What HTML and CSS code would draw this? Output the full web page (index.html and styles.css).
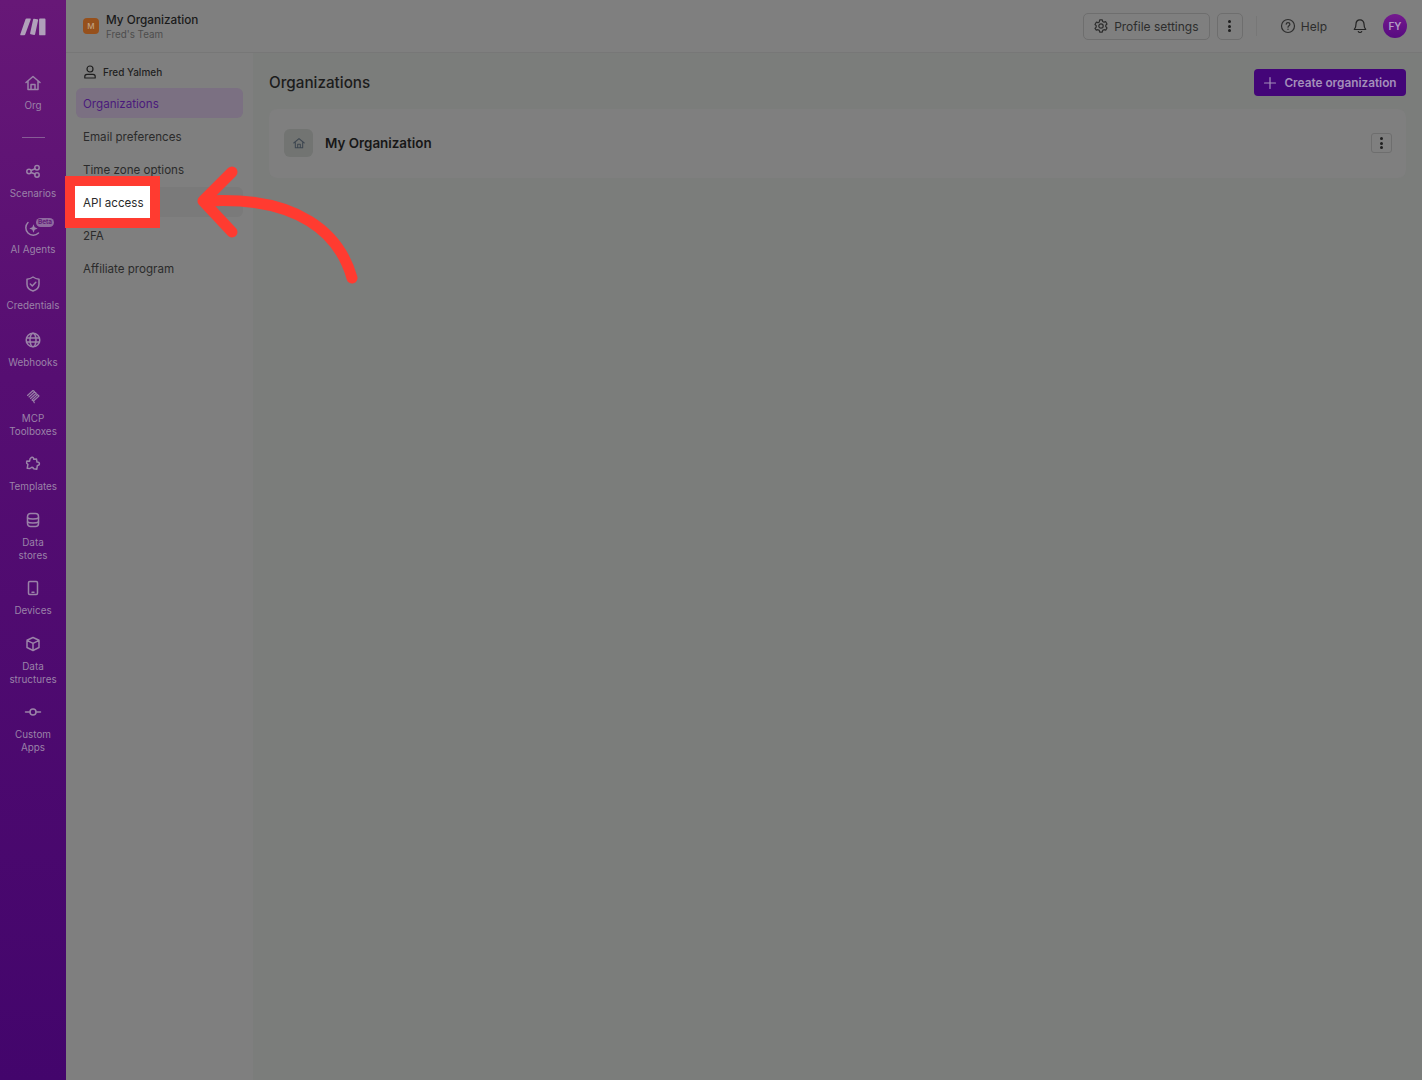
FILE: index.html
```html
<!DOCTYPE html>
<html lang="en">

<head>
    <meta charset="UTF-8">
    <meta name="viewport" content="width=device-width, initial-scale=1.0">
    <title>Organizations</title>
    <link rel="stylesheet" href="styles.css">
</head>

<body>
    <div class="app">
        <aside class="sidebar">
            <div class="logo">
                <svg width="26" height="18" viewBox="0 0 26 18"><path fill="currentColor" d="M6.500 .5h3.600c.5 0 .8.400.6.900L5.200 16.600c-.2.400-.5.700-1 .7H1c-.6 0-.9-.5-.7-1L5.600 1c.2-.3.500-.5.900-.5zM14 .7l3.400.6c.5.100.8.500.7 1l-3 13.900c-.1.500-.5.800-1 .7l-3.300-.6c-.5-.1-.8-.5-.7-1l3-13.900c.1-.5.400-.8.900-.7zM20 .5h4.600c.5 0 .9.400.9.900v15c0 .5-.4.900-.9.900H20c-.5 0-.9-.4-.9-.9v-15c0-.5.400-.9.900-.9z"/></svg>
            </div>
            <a class="side-item">
                <svg class="side-icon" viewBox="0 0 20 20"><path d="M3 9.500 10 3.500l7 6M5 8v8.500h10V8M8 16.500v-5h4v5"/></svg>
                <span>Org</span>
            </a>
            <div class="side-divider"></div>
            <a class="side-item">
                <svg class="side-icon" viewBox="0 0 20 20"><circle cx="6" cy="10.500" r="2.200"/><circle cx="14" cy="6.800" r="2.200"/><circle cx="14" cy="14" r="2.200"/><path d="M8 9.500l4-1.800M8 11.500l4 1.500"/></svg>
                <span>Scenarios</span>
            </a>
            <a class="side-item">
                <span class="ai-icon">
                    <svg class="side-icon" viewBox="0 0 20 20"><path d="M15.500 15A7.300 7.300 0 0 1 5 4.500"/><path class="solid" d="M10.500 6.300l1.200 3 3 1.200-3 1.200-1.200 3-1.200-3-3-1.200 3-1.200z"/></svg>
                    <span class="beta">Beta</span>
                </span>
                <span>AI Agents</span>
            </a>
            <a class="side-item">
                <svg class="side-icon" viewBox="0 0 20 20"><path d="M10 3c2 1.400 4 2 6 2.200v5c0 3.500-2.500 5.700-6 6.800-3.500-1.100-6-3.300-6-6.800v-5C6 5 8 4.400 10 3z"/><path d="M7.300 10l2 2 3.500-3.700"/></svg>
                <span>Credentials</span>
            </a>
            <a class="side-item">
                <svg class="side-icon" viewBox="0 0 20 20"><circle cx="10" cy="10" r="6.800"/><ellipse cx="10" cy="10" rx="3" ry="6.800"/><path d="M3.500 8h13M3.500 12h13"/></svg>
                <span>Webhooks</span>
            </a>
            <a class="side-item">
                <svg class="side-icon thin" viewBox="0 0 20 20"><path d="M4.500 9.500 10 4.500l1.500 1M6 11l5.500-5 1.500 1M7.500 12.500l5.500-5 1.500 1.200M9 14l5.500-5.300L16 10l-5.500 5-1.500-1M10.500 15l.8 1.800"/></svg>
                <span>MCP<br>Toolboxes</span>
            </a>
            <a class="side-item">
                <svg class="side-icon" viewBox="0 0 20 20"><path d="M8 3.800c.6-.8 2.200-.6 2.600.4l.2 1.100 2.700-.2.500 3c1.300-.2 2.400.5 2.400 1.700 0 1.100-.9 1.700-2 1.700l-.7 3.800-3-.6c-.4-1.200-1.300-1.500-2.300-1.200l-1.500 1-2.700-.2.700-4c-1-.5-1.500-1.400-1.300-2.200l.3-1.200 2.700.3.500-2.500z"/></svg>
                <span>Templates</span>
            </a>
            <a class="side-item">
                <svg class="side-icon" viewBox="0 0 20 20"><rect x="4.500" y="3.500" width="11" height="13" rx="3"/><path d="M4.500 8c2 1.300 9 1.300 11 0M4.500 12c2 1.300 9 1.300 11 0"/></svg>
                <span>Data<br>stores</span>
            </a>
            <a class="side-item">
                <svg class="side-icon" viewBox="0 0 20 20"><rect x="5.500" y="3.500" width="9" height="13" rx="1.200"/><path d="M9 14.300h2"/></svg>
                <span>Devices</span>
            </a>
            <a class="side-item">
                <svg class="side-icon" viewBox="0 0 20 20"><path d="M10 3.500l6 2.800v7.200l-6 3-6-3V6.300zM4 6.300l6 3 6-3M10 9.300v7.200"/></svg>
                <span>Data<br>structures</span>
            </a>
            <a class="side-item">
                <svg class="side-icon" viewBox="0 0 20 20"><circle cx="10" cy="10" r="3"/><path d="M2.500 10H7M13 10h4.500"/></svg>
                <span>Custom<br>Apps</span>
            </a>
        </aside>

        <div class="page">
            <header class="topbar">
                <div class="org-badge">M</div>
                <div class="org-info">
                    <div class="org-name">My Organization</div>
                    <div class="org-team">Fred's Team</div>
                </div>
                <div class="topbar-right">
                    <button class="btn-outline">
                        <svg class="icon" viewBox="0 0 16 16"><path d="M6.700 1.800h2.600l.4 1.700 1.300.7 1.700-.5 1.300 2.300-1.200 1.200v1.500l1.200 1.200-1.300 2.300-1.700-.5-1.300.7-.4 1.700H6.700l-.4-1.700-1.300-.7-1.700.5L2 10.400l1.200-1.200V7.700L2 6.500l1.300-2.300 1.700.5 1.300-.7z"/><circle cx="8" cy="8" r="2.200"/></svg>
                        Profile settings
                    </button>
                    <button class="btn-kebab"><span class="dots"></span></button>
                    <div class="topbar-sep"></div>
                    <a class="help">
                        <svg class="icon" viewBox="0 0 16 16"><circle cx="8" cy="8" r="6.500"/><path d="M6.200 6.200C6.400 5 7.200 4.600 8 4.600c1 0 1.900.6 1.900 1.700 0 1.400-1.900 1.500-1.900 2.900M8 11.200v.3"/></svg>
                        Help
                    </a>
                    <svg class="bell" viewBox="0 0 16 16"><path d="M8 1.800c-2.500 0-4 1.900-4 4.200 0 3-.8 4.500-1.700 5.500h11.400C12.800 10.500 12 9 12 6c0-2.300-1.500-4.200-4-4.200zM6.300 13.500c.3.700.9 1 1.700 1s1.400-.3 1.700-1"/></svg>
                    <div class="avatar">FY</div>
                </div>
            </header>

            <div class="body-row">
                <nav class="settings-nav">
                    <div class="nav-user">
                        <svg class="icon" viewBox="0 0 16 16"><circle cx="8" cy="5" r="3"/><path d="M2.800 14v-1.500c0-1.300 1-2.200 2.200-2.200h6c1.200 0 2.200.9 2.200 2.200V14z"/></svg>
                        Fred Yalmeh
                    </div>
                    <a class="nav-item active">Organizations</a>
                    <a class="nav-item">Email preferences</a>
                    <a class="nav-item">Time zone options</a>
                    <a class="nav-item hover"><span class="spot">API access</span></a>
                    <a class="nav-item">2FA</a>
                    <a class="nav-item">Affiliate program</a>
                </nav>

                <main class="content">
                    <div class="content-head">
                        <h1>Organizations</h1>
                        <button class="btn-primary">
                            <svg class="icon" viewBox="0 0 16 16"><path d="M8 2.500v11M2.500 8h11"/></svg>
                            Create organization
                        </button>
                    </div>
                    <div class="card">
                        <div class="card-icon">
                            <svg class="icon" viewBox="0 0 16 16"><path d="M2 8 8 3l6 5M3.800 7v6.500h8.400V7M6.500 13.500V9.500h3v4"/></svg>
                        </div>
                        <div class="card-name">My Organization</div>
                        <button class="btn-kebab small"><span class="dots"></span></button>
                    </div>
                </main>
            </div>
        </div>
    </div>

    <svg class="arrow" width="180" height="130" viewBox="190 160 180 130">
        <path d="M352 278C340 235 300 195 204 201"/>
        <path d="M232 172 203 201 232 232"/>
    </svg>
</body>

</html>
```

FILE: styles.css
```css
* {
    box-sizing: border-box;
}

body {
    font-family: Inter, "Noto Sans", sans-serif;
    background-color: #7f7f7f;
    color: #232323;
    margin: 0;
    height: 1080px;
    overflow: hidden;
}

button {
    font-family: inherit;
}

.app {
    display: flex;
    height: 1080px;
}

.icon {
    width: 16px;
    height: 16px;
    fill: none;
    stroke: currentColor;
    stroke-width: 1.2;
    stroke-linecap: round;
    stroke-linejoin: round;
    flex-shrink: 0;
}

/* left purple rail */
.sidebar {
    width: 66px;
    flex-shrink: 0;
    background: linear-gradient(180deg, #671877 0%, #560e72 35%, #43056c 100%);
    color: #9a82a8;
    display: flex;
    flex-direction: column;
}

.logo {
    height: 54px;
    margin-bottom: 19px;
    display: flex;
    align-items: center;
    justify-content: center;
    color: #b0a0ba;
}

.side-item {
    min-height: 56.25px;
    padding-bottom: 15.25px;
    display: flex;
    flex-direction: column;
    align-items: center;
    gap: 5.5px;
    font-size: 9.9px;
    line-height: 13.5px;
    text-align: center;
}

.side-icon {
    width: 20px;
    height: 20px;
    fill: none;
    stroke: currentColor;
    stroke-width: 1.5;
    stroke-linecap: round;
    stroke-linejoin: round;
    display: block;
}

.side-icon.thin {
    stroke-width: 1.1;
}

.side-icon .solid {
    fill: currentColor;
    stroke: none;
}

.side-divider {
    width: 23px;
    height: 1px;
    margin: 8px auto 23px;
    background: #875c96;
}

.ai-icon {
    position: relative;
    display: block;
    height: 20px;
}

.beta {
    position: absolute;
    left: 13px;
    top: 0;
    width: 18px;
    height: 9px;
    font-size: 6.5px;
    line-height: 9px;
    font-weight: 600;
    text-align: center;
    border-radius: 5px;
    background: #8f6a9f;
    color: #5f1676;
}

/* top bar */
.page {
    flex: 1;
    display: flex;
    flex-direction: column;
    min-width: 0;
}

.topbar {
    height: 53px;
    flex-shrink: 0;
    display: flex;
    align-items: center;
    padding: 0 15px 0 17px;
    border-bottom: 1px solid #777777;
    background-color: #7f7f7f;
}

.org-badge {
    width: 16px;
    height: 16px;
    margin-right: 7px;
    border-radius: 4px;
    background-color: #96501c;
    color: #c0a080;
    font-size: 8px;
    font-weight: 500;
    display: flex;
    align-items: center;
    justify-content: center;
}

.org-name {
    font-size: 11.75px;
    line-height: 14px;
    font-weight: 500;
    color: #1a1a1a;
}

.org-team {
    margin-top: 1px;
    font-size: 9.8px;
    line-height: 14px;
    color: #4d4d4d;
}

.org-info {
    padding-top: 3px;
}

.topbar-right {
    margin-left: auto;
    display: flex;
    align-items: center;
}

.btn-outline {
    height: 27px;
    width: 127px;
    display: flex;
    align-items: center;
    justify-content: center;
    gap: 5px;
    padding: 0 1px 0 0;
    border: 1px solid #6e6e6e;
    border-radius: 5px;
    background: transparent;
    color: #2d2d2d;
    font-size: 12px;
}

.btn-kebab {
    width: 26px;
    height: 27px;
    margin-left: 7px;
    display: flex;
    align-items: center;
    justify-content: center;
    padding: 0;
    border: 1px solid #6e6e6e;
    border-radius: 5px;
    background: transparent;
}

.btn-kebab.small {
    width: 21px;
    height: 20px;
    margin-left: auto;
    border-radius: 3px;
}

.dots,
.dots::before,
.dots::after {
    display: block;
    width: 3px;
    height: 3px;
    border-radius: 50%;
    background-color: #1f1f1f;
}

.dots {
    position: relative;
}

.dots::before,
.dots::after {
    content: "";
    position: absolute;
    left: 0;
}

.dots::before {
    top: -4.5px;
}

.dots::after {
    top: 4.5px;
}

.topbar-sep {
    width: 1px;
    height: 20px;
    margin: 0 23px 0 13px;
    background-color: #777777;
}

.help {
    display: flex;
    align-items: center;
    gap: 5px;
    font-size: 12px;
    color: #2d2d2d;
}

.bell {
    width: 16px;
    height: 16px;
    margin-left: 25px;
    fill: none;
    stroke: #232323;
    stroke-width: 1.2;
    stroke-linecap: round;
    stroke-linejoin: round;
}

.avatar {
    width: 24px;
    height: 24px;
    margin-left: 15px;
    border-radius: 50%;
    background: linear-gradient(180deg, #741a8e, #570a80);
    color: #b39cc4;
    font-size: 10px;
    font-weight: 600;
    display: flex;
    align-items: center;
    justify-content: center;
}

/* settings list */
.body-row {
    flex: 1;
    display: flex;
    min-height: 0;
}

.settings-nav {
    width: 187px;
    flex-shrink: 0;
    padding: 8px 10px;
    display: flex;
    flex-direction: column;
    gap: 3px;
}

.nav-user {
    height: 22px;
    margin-bottom: 2px;
    padding-left: 6px;
    display: flex;
    align-items: center;
    gap: 5px;
    font-size: 10px;
    font-weight: 500;
    color: #1f1f1f;
}

.nav-item {
    position: relative;
    height: 30px;
    padding-left: 7px;
    padding-top: 1px;
    border-radius: 6px;
    display: flex;
    align-items: center;
    font-size: 11.6px;
    color: #2b2b2b;
}

.nav-item.active {
    background-color: #7b7082;
    color: #4a1a7c;
}

.nav-item.hover {
    background-color: #7a7a7a;
}

.spot {
    position: absolute;
    left: -11px;
    top: -11px;
    width: 95px;
    height: 52px;
    padding-left: 8px;
    padding-top: 1px;
    display: flex;
    align-items: center;
    border: 10px solid #ff3b30;
    background-color: #fff;
    color: #2b2b2b;
}

/* main area */
.content {
    flex: 1;
    min-width: 0;
    padding: 16px 16px 0;
    background-color: #7b7d7b;
}

.content-head {
    height: 27px;
    margin-bottom: 13px;
    display: flex;
    align-items: center;
    justify-content: space-between;
}

h1 {
    margin: 0 0 1px;
    font-size: 15.25px;
    font-weight: 500;
    color: #1c1c1c;
}

.btn-primary {
    height: 27px;
    width: 152px;
    display: flex;
    align-items: center;
    justify-content: center;
    gap: 6px;
    padding: 0 1px 0 0;
    border: none;
    border-radius: 4px;
    background-color: #430578;
    color: #a48fba;
    font-size: 11.8px;
    font-weight: 600;
}

.card {
    height: 69px;
    padding: 0 14px 1px 15px;
    display: flex;
    align-items: center;
    border-radius: 8px;
    background-color: #7f7f7f;
}

.card-icon {
    width: 29px;
    height: 28px;
    margin-right: 12px;
    border-radius: 6px;
    background-color: #727472;
    color: #3d4650;
    display: flex;
    align-items: center;
    justify-content: center;
}

.card-icon .icon {
    width: 14px;
    height: 14px;
}

.card-name {
    font-size: 13.4px;
    font-weight: 600;
    color: #171717;
}

/* annotation arrow over the page */
.arrow {
    position: absolute;
    left: 190px;
    top: 160px;
    fill: none;
    stroke: #ff3b30;
    stroke-width: 11;
    stroke-linecap: round;
    stroke-linejoin: round;
}
```
